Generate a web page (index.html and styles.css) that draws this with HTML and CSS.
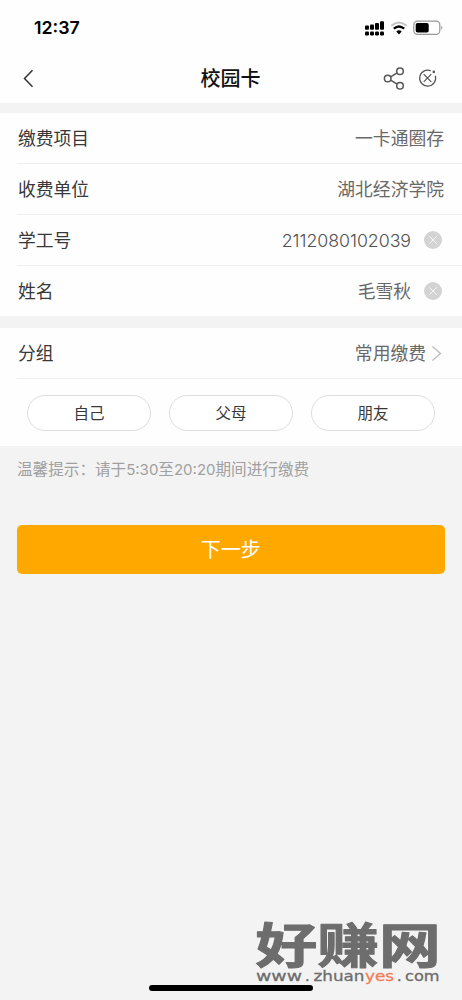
FILE: index.html
```
<!DOCTYPE html>
<html lang="zh-CN">
<head>
<meta charset="utf-8">
<title>校园卡</title>
<link rel="stylesheet" href="styles.css">
</head>
<body>
<main class="screen">
  <header class="top">
    <div class="status">
      <span class="time">12:37</span>
      <svg class="status-icons" width="80" height="18" viewBox="0 0 80 18">
        <g fill="#000">
          <rect x="1" y="6.5" width="4" height="4.3" rx="1"/><rect x="6" y="5.5" width="4" height="5.3" rx="1"/><rect x="11" y="4" width="4" height="6.8" rx="1"/><rect x="16" y="2.2" width="4" height="8.6" rx="1"/>
          <rect x="1" y="12.5" width="4" height="4" rx="1.2"/><rect x="6" y="12.5" width="4" height="4" rx="1.2"/><rect x="11" y="12.5" width="4" height="4" rx="1.2"/><rect x="16" y="12.5" width="4" height="4" rx="1.2"/>
        </g>
        <path d="M27.3 6.7Q35 .2 42.7 6.7" fill="none" stroke="#c4c4c4" stroke-width="2"/>
        <path d="M29.8 9.7Q35 5.3 40.2 9.7" fill="none" stroke="#000" stroke-width="2.3"/>
        <path d="M32.3 12.5Q35 10.1 37.7 12.5L35 15.5Z"/>
        <rect x="49.8" y="2.2" width="26" height="13.2" rx="3.6" fill="#fff" stroke="#999" stroke-width="1.2"/>
        <rect x="51.7" y="4" width="13" height="9.6" rx="1.8"/>
        <path d="M77.3 6.8Q79.4 8.8 77.3 10.8Z" fill="#888"/>
      </svg>
    </div>
    <nav class="nav">
      <svg class="back" width="14" height="20" viewBox="0 0 14 20"><path d="M11.5 1.3L3.5 9.5L11.5 17.8" fill="none" stroke="#333" stroke-width="1.5"/></svg>
      <h1 class="title">校园卡</h1>
      <svg class="actions" width="56" height="26" viewBox="0 0 56 26" fill="none" stroke="#555" stroke-width="1.5">
        <circle cx="5.7" cy="12.5" r="3.3"/><circle cx="18" cy="5.2" r="3.3"/><circle cx="18" cy="19.8" r="3.3"/>
        <path d="M8.6 10.8L15.1 6.9M8.6 14.2L15.1 18.1"/>
        <path d="M48.8 4.8A8 8 0 1 0 53.3 9.8" stroke-width="1.2"/>
        <path d="M41.7 8.2L49.3 15.8M49.3 8.2L41.7 15.8" stroke-width="1.2"/>
        <circle cx="51.8" cy="5.9" r="1.3" fill="#555" stroke="none"/>
      </svg>
    </nav>
  </header>
  <section class="card details">
    <div class="row"><span>缴费项目</span><span class="value">一卡通圈存</span></div>
    <div class="row"><span>收费单位</span><span class="value">湖北经济学院</span></div>
    <div class="row"><span>学工号</span><span class="value number">2112080102039</span><svg class="clear" width="18" height="18" viewBox="0 0 18 18"><circle cx="9" cy="9" r="9" fill="#d3d3d3"/><path d="M5.2 5.2L12.8 12.8M12.8 5.2L5.2 12.8" stroke="#f5f5f5" stroke-width="1"/></svg></div>
    <div class="row"><span>姓名</span><span class="value">毛雪秋</span><svg class="clear" width="18" height="18" viewBox="0 0 18 18"><circle cx="9" cy="9" r="9" fill="#d3d3d3"/><path d="M5.2 5.2L12.8 12.8M12.8 5.2L5.2 12.8" stroke="#f5f5f5" stroke-width="1"/></svg></div>
  </section>
  <section class="card group">
    <div class="row"><span>分组</span><span class="value">常用缴费</span><svg class="more" width="12" height="18" viewBox="0 0 12 18"><path d="M1.5 1.5L9.5 8.5L1.5 15.5" fill="none" stroke="#bbb" stroke-width="1.3"/></svg></div>
    <div class="chips"><button class="chip">自己</button><button class="chip">父母</button><button class="chip">朋友</button></div>
  </section>
  <p class="hint">温馨提示：请于<span class="latin">5:30</span>至<span class="latin">20:20</span>期间进行缴费</p>
  <button class="next">下一步</button>
  <div class="home"></div>
  <svg class="watermark" width="190" height="92" viewBox="0 0 190 92">
    <text class="brand" transform="translate(1.5 65.7) scale(1.3 1)" x="0" y="0">好赚网</text>
    <g class="site">
      <text x="2" y="83.5" textLength="46" lengthAdjust="spacingAndGlyphs">www</text>
      <text x="51" y="83.5">.</text>
      <text x="59.5" y="83.5" textLength="51" lengthAdjust="spacingAndGlyphs">zhuan</text>
      <text class="accent" x="111" y="83.5" textLength="29" lengthAdjust="spacingAndGlyphs">yes</text>
      <text x="143" y="83.5">.</text>
      <text x="151" y="83.5" textLength="34.5" lengthAdjust="spacingAndGlyphs">com</text>
    </g>
  </svg>
</main>
</body>
</html>
```

FILE: styles.css
```
* { box-sizing: border-box; }
body { margin: 0; background: #f3f3f3; color: #383838; font-family: "Liberation Sans", "Noto Sans CJK SC", sans-serif; }
button { font-family: inherit; padding: 0; }
.screen { position: relative; height: 1000px; overflow: hidden; }
.top { height: 103px; background: #fefefe; }
.status { height: 54px; padding: 2px 18px 0 34px; display: flex; align-items: center; justify-content: space-between; }
.time { font: 600 17.8px/20px Inter, sans-serif; color: #000; }
.nav { height: 49px; padding: 0 24px 0 21px; display: grid; grid-template-columns: 56px 1fr 56px; align-items: center; }
.title { margin: 0; text-align: center; font-size: 20px; line-height: 28px; font-weight: 500; color: #111; padding: 1px 0 0 2px; }
.card { background: #fefefe; }
.details { margin-top: 10px; height: 203px; }
.row { height: 51px; margin-left: 17px; padding: 1px 18px 0 1px; display: flex; align-items: center; border-bottom: 1px solid #efefef; font-size: 17.8px; line-height: 26px; }
.row > span { padding-top: 1px; }
.details .row:last-child { height: 50px; border-bottom: 0; }
.value { margin-left: auto; color: #686868; }
.number { font-family: Inter, sans-serif; font-weight: 300; font-size: 17.8px; letter-spacing: -.05px; color: #505050; }
.clear { margin: -1px 2px 0 13px; }
.group { margin-top: 12px; height: 118px; }
.more { margin-left: 5px; margin-right: 1px; }
.chips { display: flex; gap: 18px; padding: 16px 27px 0; }
.chip { flex: 1; height: 36px; padding-top: 2px; border: 1px solid #dedede; border-radius: 18px; background: #fff; color: #383838; font-size: 15.5px; line-height: 22px; }
.hint { margin: 12px 17px 0; height: 24px; font-size: 15.6px; line-height: 24px; color: #a0a0a0; }
.latin { font-family: Inter, sans-serif; font-size: 15px; }
.next { display: block; width: 428.5px; height: 49px; margin: 42.5px 0 0 16.5px; padding-top: 2px; border: 0; border-radius: 5px; background: #ffa800; color: #fff; font-size: 20px; font-weight: 400; line-height: 28px; }
.home { position: absolute; left: 149px; bottom: 9px; width: 164px; height: 6px; border-radius: 3px; background: #000; }
.watermark { position: absolute; left: 254px; top: 897px; }
.brand { font-family: "Noto Sans CJK SC", sans-serif; font-size: 47.5px; font-weight: 700; fill: #6d6d6d; stroke: #6d6d6d; stroke-width: 1px; stroke-linejoin: round; }
.site { font-family: "DejaVu Sans", sans-serif; font-size: 14.5px; fill: #6d6d6d; stroke: #6d6d6d; stroke-width: .3px; }
.site .accent { fill: #f47c57; stroke: #f47c57; }
```
